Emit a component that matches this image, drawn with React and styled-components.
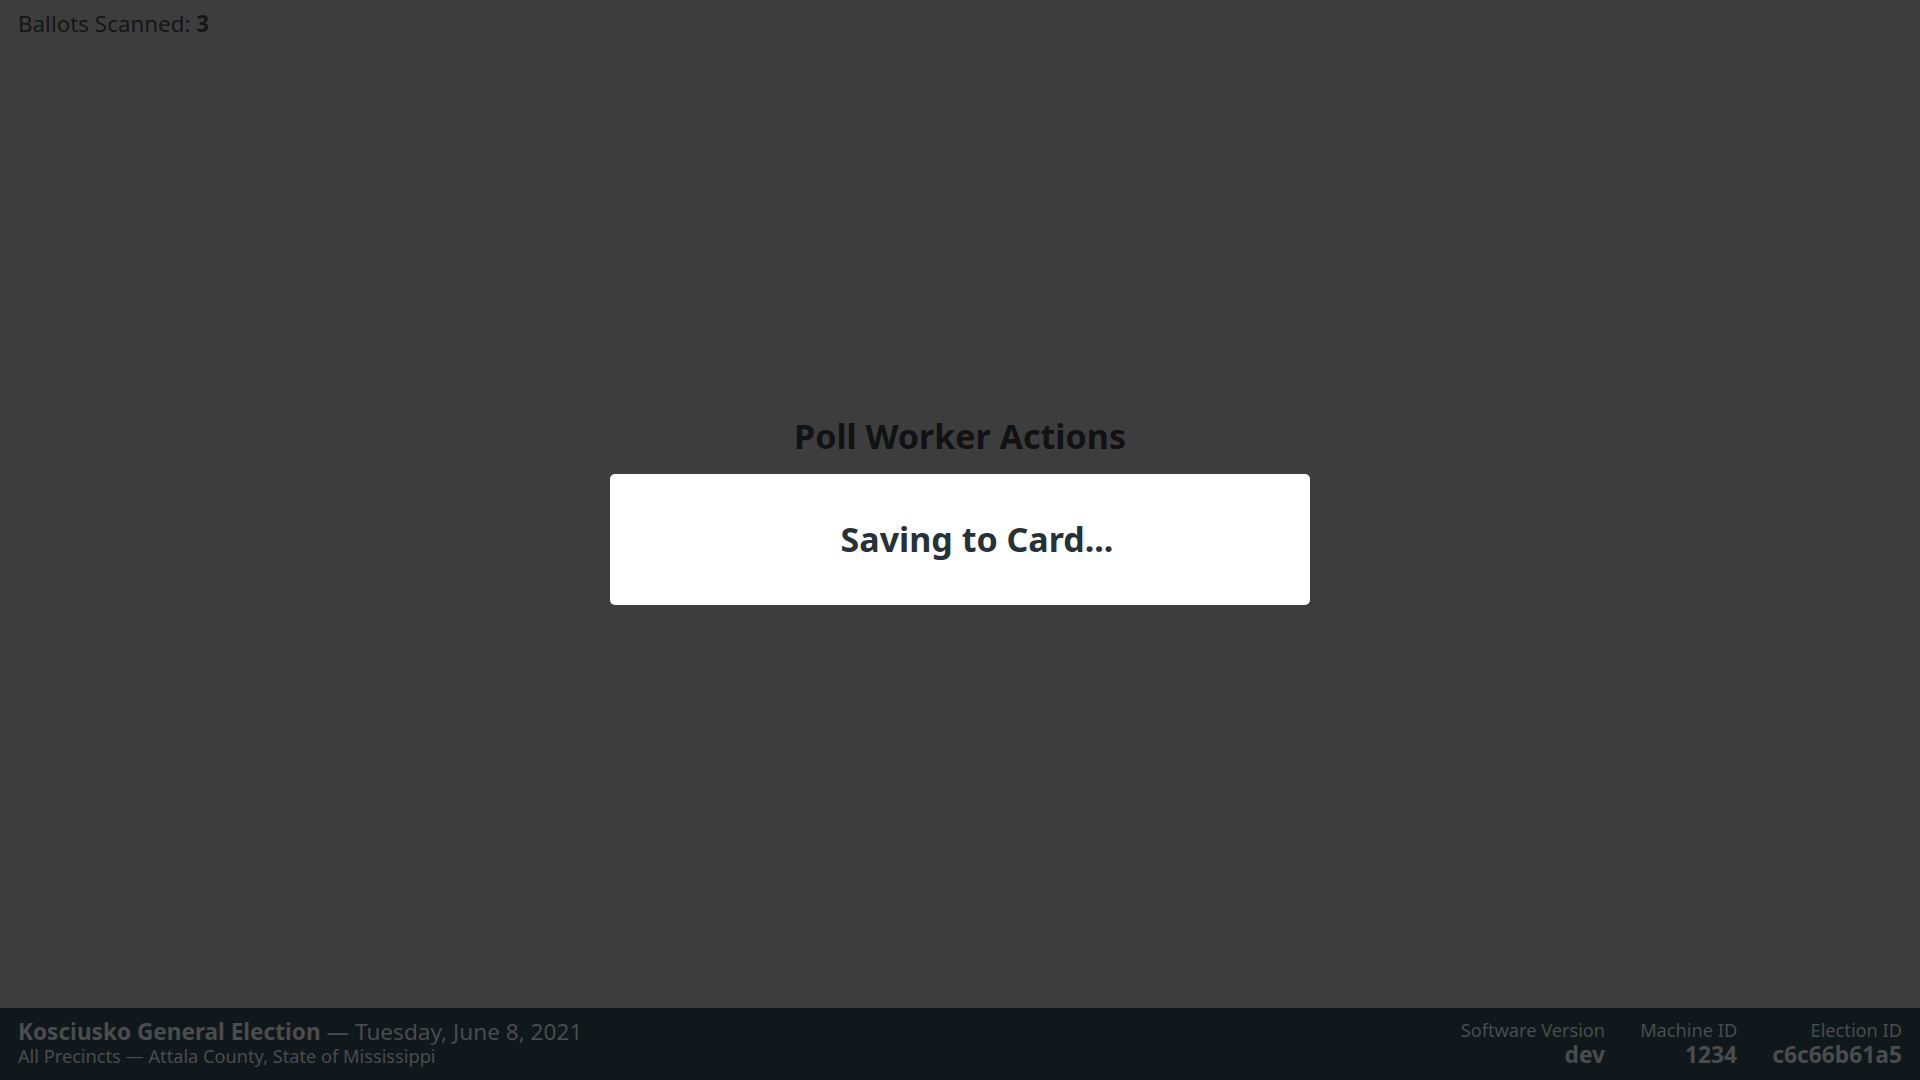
import React from 'react'
import styled, { createGlobalStyle } from 'styled-components'

const GlobalStyle = createGlobalStyle`
  html, body {
    margin: 0;
    padding: 0;
    height: 100%;
  }
  body {
    background: #3d3d3d;
    font-family: "Noto Sans", "Open Sans", sans-serif;
  }
  #root {
    height: 100%;
  }
`

const Screen = styled.div`
  display: flex;
  flex-direction: column;
  height: 100vh;
  width: 100vw;
  background: #3d3d3d;
`

const Main = styled.main`
  flex: 1;
  display: flex;
  flex-direction: column;
`

const TopBar = styled.div`
  padding: 7px 18px 0;
  font-size: 22.4px;
  line-height: 34px;
  color: #141617;
  strong {
    font-weight: 700;
  }
`

const Center = styled.div`
  flex: 1;
  display: flex;
  flex-direction: column;
  align-items: center;
  justify-content: center;
  padding-bottom: 31px;
`

const Title = styled.h1`
  margin: 0 0 16px;
  font-size: 34px;
  line-height: 44px;
  font-weight: 700;
  color: #101213;
`

const Modal = styled.div`
  width: 700px;
  height: 131px;
  background: #ffffff;
  border-radius: 5px;
  display: flex;
  align-items: center;
  justify-content: center;
  padding-left: 34px;
  box-sizing: border-box;
`

const ModalText = styled.h2`
  margin: 0;
  font-size: 34px;
  font-weight: 700;
  color: #263238;
`

const Footer = styled.footer`
  height: 72px;
  background: #11181b;
  display: flex;
  align-items: center;
  justify-content: space-between;
  padding: 0 18px 2px;
  box-sizing: border-box;
  color: #4a4c4d;
`

const ElectionInfo = styled.div`
  display: flex;
  flex-direction: column;
`

const ElectionLine = styled.div`
  font-size: 22.6px;
  line-height: 26px;
  strong {
    font-weight: 700;
  }
`

const PrecinctLine = styled.div`
  font-size: 18.2px;
  line-height: 22px;
`

const Meta = styled.div`
  display: flex;
  gap: 35px;
`

const MetaItem = styled.div`
  display: flex;
  flex-direction: column;
  align-items: flex-end;
`

const MetaLabel = styled.div`
  font-size: 18.2px;
  line-height: 24px;
`

const MetaValue = styled.div`
  font-size: 22.8px;
  line-height: 26px;
  font-weight: 700;
`

export default function App() {
  return (
    <>
      <GlobalStyle />
      <Screen>
        <Main>
          <TopBar>
            Ballots Scanned: <strong>3</strong>
          </TopBar>
          <Center>
            <Title>Poll Worker Actions</Title>
            <Modal>
              <ModalText>Saving to Card...</ModalText>
            </Modal>
          </Center>
        </Main>
        <Footer>
          <ElectionInfo>
            <ElectionLine>
              <strong>Kosciusko General Election</strong> — Tuesday, June 8, 2021
            </ElectionLine>
            <PrecinctLine>All Precincts — Attala County, State of Mississippi</PrecinctLine>
          </ElectionInfo>
          <Meta>
            <MetaItem>
              <MetaLabel>Software Version</MetaLabel>
              <MetaValue>dev</MetaValue>
            </MetaItem>
            <MetaItem>
              <MetaLabel>Machine ID</MetaLabel>
              <MetaValue>1234</MetaValue>
            </MetaItem>
            <MetaItem>
              <MetaLabel>Election ID</MetaLabel>
              <MetaValue>c6c66b61a5</MetaValue>
            </MetaItem>
          </Meta>
        </Footer>
      </Screen>
    </>
  )
}
